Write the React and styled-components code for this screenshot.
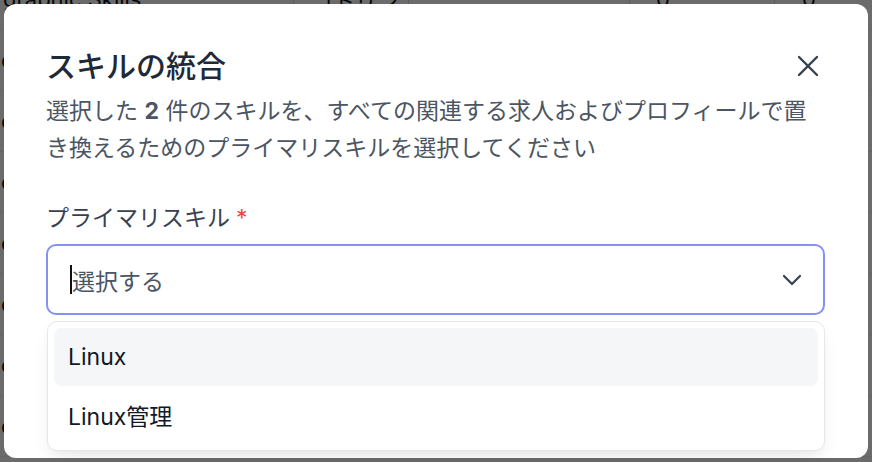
import React from "react";
import styled, { createGlobalStyle } from "styled-components";

const GlobalStyle = createGlobalStyle`
  html, body { margin: 0; padding: 0; width: 100%; height: 100%; overflow: hidden; }
  body { font-family: Inter, "Noto Sans CJK JP", sans-serif; background: #fff; }
  * { box-sizing: border-box; }
`;

const Page = styled.div`
  position: relative;
  width: 872px;
  height: 462px;
  overflow: hidden;
  background: #fff;
`;

const BgTable = styled.div`
  display: flex;
  flex-direction: column;
  margin-top: -31px;
`;

const BgRow = styled.div`
  display: grid;
  grid-template-columns: 293px 115px 221px 145px 98px;
  height: 61px;
  border-bottom: 1px solid #eef0f3;
`;

const BgCell = styled.div`
  display: flex;
  align-items: center;
  justify-content: ${(p) => p.$align || "flex-start"};
  padding-left: ${(p) => p.$pad || 0}px;
  border-left: ${(p) => (p.$line ? "1px solid #d8dbe0" : "none")};
  font-size: 22px;
  color: #111;
  white-space: nowrap;
`;

const Overlay = styled.div`
  position: absolute;
  inset: 0;
  background: rgba(0, 0, 0, 0.58);
  padding: 4px;
  display: flex;
  align-items: flex-start;
`;

const Modal = styled.div`
  position: relative;
  width: 864px;
  height: 454px;
  background: #fff;
  border-radius: 12px;
  padding: 44px 43px 0 42px;
  display: flex;
  flex-direction: column;
`;

const Header = styled.div`
  display: flex;
  align-items: center;
  justify-content: space-between;
  height: 36px;
`;

const Title = styled.h2`
  margin: 0;
  font-size: 30px;
  line-height: 36px;
  font-weight: 500;
  color: #1f2937;
`;

const CloseButton = styled.button`
  border: none;
  background: none;
  padding: 0;
  margin-right: 5px;
  display: flex;
  cursor: pointer;
  color: #374151;
`;

const Description = styled.p`
  margin: 9px 0 0;
  font-size: 23px;
  line-height: 36.5px;
  color: #4b5563;
  b { font-weight: 700; }
`;

const Field = styled.div`
  margin-top: 36px;
  display: flex;
  flex-direction: column;
`;

const Label = styled.label`
  font-size: 23px;
  line-height: 32px;
  color: #374151;
`;

const Required = styled.span`
  color: #ef4444;
  margin-left: 6px;
`;

const SelectWrap = styled.div`
  position: relative;
  margin-top: 10px;
`;

const SelectBox = styled.div`
  height: 71px;
  border: 2px solid #858ff6;
  border-radius: 10px;
  display: flex;
  align-items: center;
  padding: 0 21px 0 22px;
`;

const Caret = styled.span`
  width: 2px;
  height: 29px;
  background: #111;
  flex: none;
`;

const Placeholder = styled.span`
  flex: 1;
  font-size: 23px;
  color: #4b5563;
`;

const Menu = styled.div`
  position: absolute;
  top: calc(100% + 6px);
  left: 1px;
  right: 0;
  height: 130px;
  background: #fff;
  border: 1px solid #e5e7eb;
  border-radius: 10px;
  box-shadow: 0 10px 20px -4px rgba(0, 0, 0, 0.08), 0 4px 8px -4px rgba(0, 0, 0, 0.06);
  padding: 6px;
  display: flex;
  flex-direction: column;
`;

const Option = styled.div`
  height: 58px;
  border-radius: 8px;
  display: flex;
  align-items: center;
  padding-left: 14px;
  font-size: 23px;
  color: #111827;
  background: ${(p) => (p.$active ? "#f5f6f8" : "transparent")};
`;

const bgRows = [
  ["graphic Skills", "コトリン", "0", "0"],
  ["c", "", "", ""],
  ["c", "", "", ""],
  ["c", "", "", ""],
  ["c", "", "", ""],
  ["c", "", "", ""],
  ["c", "", "", ""],
  ["c", "", "", ""],
];

export default function App() {
  return (
    <Page>
      <GlobalStyle />
      <BgTable>
        {bgRows.map((r, i) => (
          <BgRow key={i}>
            <BgCell $pad={i === 0 ? 3 : 1}>{r[0]}</BgCell>
            <BgCell $line $pad={17}>{r[1]}</BgCell>
            <BgCell $line />
            <BgCell $line $pad={26}>{r[2]}</BgCell>
            <BgCell $line $pad={27}>{r[3]}</BgCell>
          </BgRow>
        ))}
      </BgTable>
      <Overlay>
        <Modal>
          <Header>
            <Title>スキルの統合</Title>
            <CloseButton aria-label="閉じる">
              <svg width="24" height="24" viewBox="0 0 24 24" fill="none" stroke="currentColor" strokeWidth="2.4" strokeLinecap="round">
                <line x1="3" y1="3" x2="21" y2="21" />
                <line x1="21" y1="3" x2="3" y2="21" />
              </svg>
            </CloseButton>
          </Header>
          <Description>
            選択した <b>2</b> 件のスキルを、すべての関連する求人およびプロフィールで置き換えるためのプライマリスキルを選択してください
          </Description>
          <Field>
            <Label>
              プライマリスキル<Required>*</Required>
            </Label>
            <SelectWrap>
              <SelectBox>
                <Caret />
                <Placeholder>選択する</Placeholder>
                <svg width="20" height="12" viewBox="0 0 20 12" fill="none" stroke="#374151" strokeWidth="2.2" strokeLinecap="round" strokeLinejoin="round">
                  <polyline points="2,2 10,10 18,2" />
                </svg>
              </SelectBox>
              <Menu>
                <Option $active>Linux</Option>
                <Option>Linux管理</Option>
              </Menu>
            </SelectWrap>
          </Field>
        </Modal>
      </Overlay>
    </Page>
  );
}
